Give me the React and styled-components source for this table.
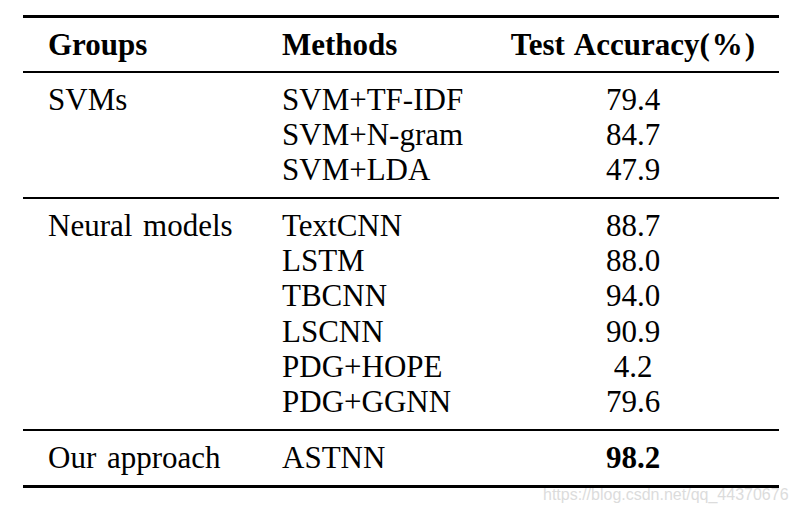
import React from "react";
import styled, { createGlobalStyle } from "styled-components";

const Global = createGlobalStyle`
  html, body { margin: 0; padding: 0; background: #fff; }
  body { width: 796px; height: 514px; overflow: hidden; position: relative; }
`;

const Table = styled.div`
  margin: 15px 0 0 23px;
  width: 756px;
  border-top: 3px solid #000;
  border-bottom: 3px solid #000;
  font-family: "Liberation Serif", "Times New Roman", serif;
  font-size: 31px;
  color: #000;
`;

const Section = styled.div`
  display: grid;
  grid-template-columns: 259px 205px 292px;
  grid-auto-rows: 35.33px;
  line-height: 35.33px;
  padding: 8.5px 0 9.5px;
  border-bottom: ${(p) => (p.$last ? "none" : "2px solid #000")};
`;

const Cell = styled.div`
  white-space: nowrap;
  word-spacing: 3px;
  font-weight: ${(p) => (p.$bold ? 700 : 400)};
  text-align: ${(p) => (p.$center ? "center" : "left")};
  padding-left: ${(p) => (p.$first ? "25px" : "0")};
  grid-column: ${(p) => p.$col};
`;

const Pct = styled.span`
  margin: 0 2px;
`;

const Watermark = styled.div`
  position: absolute;
  left: 543px;
  top: 486px;
  font-family: "Liberation Sans", Arial, sans-serif;
  font-size: 16px;
  line-height: 18px;
  color: #dcdcdc;
  white-space: nowrap;
`;

const groups = [
  {
    name: "SVMs",
    rows: [
      ["SVM+TF-IDF", "79.4"],
      ["SVM+N-gram", "84.7"],
      ["SVM+LDA", "47.9"],
    ],
  },
  {
    name: "Neural models",
    rows: [
      ["TextCNN", "88.7"],
      ["LSTM", "88.0"],
      ["TBCNN", "94.0"],
      ["LSCNN", "90.9"],
      ["PDG+HOPE", "4.2"],
      ["PDG+GGNN", "79.6"],
    ],
  },
  {
    name: "Our approach",
    rows: [["ASTNN", "98.2", true]],
  },
];

export default function App() {
  return (
    <>
      <Global />
      <Table>
        <Section>
          <Cell $bold $first $col={1}>Groups</Cell>
          <Cell $bold $col={2}>Methods</Cell>
          <Cell $bold $center $col={3}>
            Test Accuracy(<Pct>%</Pct>)
          </Cell>
        </Section>
        {groups.map((g, gi) => (
          <Section key={g.name} $last={gi === groups.length - 1}>
            {g.rows.map(([m, v, best], i) => (
              <React.Fragment key={m}>
                <Cell $first $col={1}>{i === 0 ? g.name : ""}</Cell>
                <Cell $col={2}>{m}</Cell>
                <Cell $center $bold={best} $col={3}>{v}</Cell>
              </React.Fragment>
            ))}
          </Section>
        ))}
      </Table>
      <Watermark>https://blog.csdn.net/qq_44370676</Watermark>
    </>
  );
}
